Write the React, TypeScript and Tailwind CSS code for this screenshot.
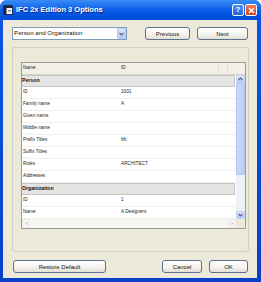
import React from "react";

type Row = { group?: boolean; name: string; value?: string };

const rows: Row[] = [
  { group: true, name: "Person" },
  { name: "ID", value: "1001" },
  { name: "Family name", value: "A" },
  { name: "Given name" },
  { name: "Middle name" },
  { name: "Prefix Titles", value: "Mr." },
  { name: "Suffix Titles" },
  { name: "Roles", value: "ARCHITECT" },
  { name: "Addresses" },
  { group: true, name: "Organization" },
  { name: "ID", value: "1" },
  { name: "Name", value: "A Designers" },
];

function XPButton({ label, className }: { label: string; className: string }) {
  return (
    <div
      className={`h-[13px] flex items-center justify-center rounded-[3px] border border-[#5f7190] bg-gradient-to-b from-[#ffffff] via-[#f6f5f1] to-[#e3e0d6] text-[6px] leading-none text-[#111] ${className}`}
    >
      {label}
    </div>
  );
}

function Chevron({ up }: { up?: boolean }) {
  return (
    <svg width="5" height="4" viewBox="0 0 5 4">
      <path
        d={up ? "M0.5 3 L2.5 1 L4.5 3" : "M0.5 1 L2.5 3 L4.5 1"}
        fill="none"
        stroke="#4d6185"
        strokeWidth="1.1"
      />
    </svg>
  );
}

export default function App() {
  return (
    <div className="w-[261px] h-[282px] flex flex-col bg-gradient-to-b from-[#0a58e6] to-[#0840c8] rounded-t-[7px] overflow-hidden font-['Liberation_Sans',Arial,sans-serif]">
      {/* Title bar */}
      <div className="h-[20px] shrink-0 flex items-center pl-[3px] pr-[4px] bg-gradient-to-b from-[#3a8cf6] via-[#0a5ee9] to-[#0048d8]">
        <svg width="10" height="10" viewBox="0 0 10 10" className="shrink-0">
          <rect x="0.5" y="0.5" width="9" height="9" fill="#f4f4f4" stroke="#203060" strokeWidth="1" />
          <rect x="1" y="1" width="8" height="2" fill="#1b2440" />
          <rect x="1" y="3" width="2.5" height="6" fill="#1b2440" />
          <rect x="5" y="5" width="3" height="1.5" fill="#8090a8" />
        </svg>
        <span className="ml-[3px] text-[7.5px] font-bold text-white leading-none [text-shadow:1px_1px_0_#0a2a80]">
          IFC 2x Edition 3 Options
        </span>
        <div className="ml-auto flex gap-[1px]">
          <div className="w-[12px] h-[12px] rounded-[2px] border border-white bg-gradient-to-b from-[#4f8ef8] to-[#2a63e0] flex items-center justify-center text-white text-[8px] font-bold leading-none">
            ?
          </div>
          <div className="w-[12px] h-[12px] rounded-[2px] border border-white bg-gradient-to-b from-[#ee7a55] to-[#d2401c] flex items-center justify-center">
            <svg width="7" height="7" viewBox="0 0 7 7">
              <path d="M1 1 L6 6 M6 1 L1 6" stroke="white" strokeWidth="1.5" />
            </svg>
          </div>
        </div>
      </div>

      {/* Body */}
      <div className="flex-1 ml-[3px] mr-[4px] mb-[4px] bg-[#ece9d8] flex flex-col pl-[9px] pr-[8px] pt-[7px]">
        {/* Top row */}
        <div className="h-[13px] flex items-center">
          <div className="w-[115px] h-[13px] border border-[#7f9db9] bg-white flex items-center pl-[1px]">
            <span className="flex-1 text-[6.2px] leading-none text-[#111]">Person and Organization</span>
            <div className="w-[9px] h-[11px] rounded-[1px] bg-gradient-to-b from-[#dce6fc] to-[#b6c9f6] border border-[#b8c9f0] flex items-center justify-center">
              <Chevron />
            </div>
          </div>
          <XPButton label="Previous" className="ml-[18px] w-[45px]" />
          <XPButton label="Next" className="ml-[7px] w-[51px]" />
        </div>

        {/* Group box */}
        <div className="mt-[7px] w-[237px] h-[205px] border border-[#d0d0bf] rounded-[3px] pt-[14px] pl-[8px]">
          <div className="w-[225px] h-[167px] border border-[#9a9a96] bg-white flex flex-col">
            {/* Header */}
            <div className="h-[12px] shrink-0 flex items-center bg-[#f1efe6] border-b border-[#d8d5c6] relative">
              <div className="w-[98px] pl-[1px] text-[4.7px] leading-none text-[#222]">Name</div>
              <div className="pl-[1px] text-[4.7px] leading-none text-[#222]">ID</div>
              <div className="absolute left-[196px] top-[1px] bottom-[1px] w-px bg-[#e2dfd2]" />
              <div className="absolute left-[205px] top-[1px] bottom-[1px] w-px bg-[#e2dfd2]" />
            </div>
            {/* Rows + vscroll */}
            <div className="h-[144px] shrink-0 flex">
              <div className="w-[214px] flex flex-col">
                {rows.map((r, i) =>
                  r.group ? (
                    <div
                      key={i}
                      className="h-[12px] flex items-center bg-[#e4e4e2] border-y border-r border-[#c4c4c0] pl-[0px] rounded-r-[1px] mr-[1px]"
                    >
                      <span className="text-[5.2px] font-bold leading-none text-[#111]">{r.name}</span>
                    </div>
                  ) : (
                    <div key={i} className="h-[12px] flex items-center border-b border-[#f0f0ee]">
                      <div className="w-[98px] pl-[1px] text-[4.7px] leading-none text-[#222]">{r.name}</div>
                      <div className="pl-[1px] text-[4.7px] leading-none text-[#222]">{r.value ?? ""}</div>
                    </div>
                  )
                )}
              </div>
              {/* Vertical scrollbar */}
              <div className="w-[9px] flex flex-col bg-[#eef1f8]">
                <div className="h-[8px] bg-gradient-to-b from-[#dbe5fb] to-[#bccdf6] border border-[#c2d1f2] rounded-[1px] flex items-center justify-center">
                  <Chevron up />
                </div>
                <div className="h-[92px] bg-gradient-to-r from-[#cad9fb] to-[#b9cdf7] border border-[#b0c4ee] rounded-[1px]" />
                <div className="flex-1" />
                <div className="h-[8px] bg-gradient-to-b from-[#dbe5fb] to-[#bccdf6] border border-[#c2d1f2] rounded-[1px] flex items-center justify-center">
                  <Chevron />
                </div>
              </div>
            </div>
            {/* Horizontal scrollbar */}
            <div className="h-[9px] shrink-0 flex">
              <div className="w-[214px] flex bg-[#f6f6f2]">
                <div className="w-[8px] flex items-center justify-center border border-[#ecebe4]">
                  <svg width="3" height="5" viewBox="0 0 3 5">
                    <path d="M2.5 0.5 L0.5 2.5 L2.5 4.5 Z" fill="#c9c9c2" />
                  </svg>
                </div>
                <div className="flex-1" />
                <div className="w-[8px] flex items-center justify-center border border-[#ecebe4]">
                  <svg width="3" height="5" viewBox="0 0 3 5">
                    <path d="M0.5 0.5 L2.5 2.5 L0.5 4.5 Z" fill="#c9c9c2" />
                  </svg>
                </div>
              </div>
              <div className="w-[9px] bg-[#ece9d8]" />
            </div>
          </div>
        </div>

        {/* Bottom buttons */}
        <div className="mt-[8px] h-[13px] flex items-center">
          <XPButton label="Restore Default" className="ml-[1px] w-[93px]" />
          <XPButton label="Cancel" className="ml-[56px] w-[40px]" />
          <XPButton label="OK" className="ml-[7px] w-[39px]" />
        </div>
      </div>
    </div>
  );
}
